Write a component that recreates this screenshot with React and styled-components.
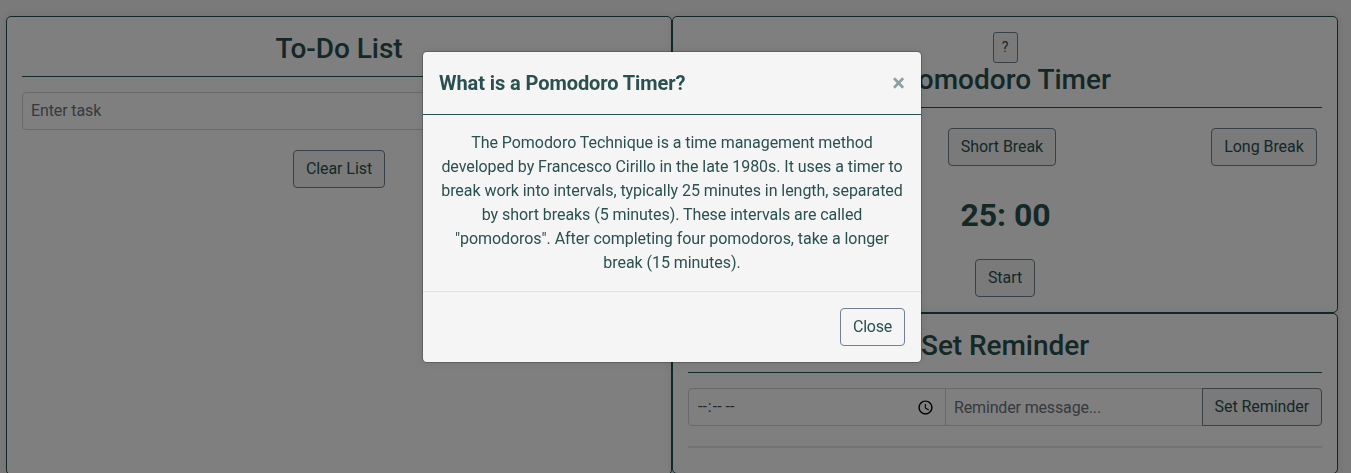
import React from "react";
import styled, { createGlobalStyle, css } from "styled-components";

const Global = createGlobalStyle`
  *, *::before, *::after { box-sizing: border-box; }
  html, body { height: 100%; overflow: hidden; }
  body {
    margin: 0;
    background: #f5f5f5;
    color: #2a5050;
    font: 400 16px/1.5 Roboto, sans-serif;
    letter-spacing: -0.055px;
    text-align: center;
  }
`;

const Page = styled.main`
  display: grid;
  grid-template-columns: 666px 666px;
  padding: 16px 0 0 6px;
`;

const Column = styled.div`
  display: flex;
  flex-direction: column;
`;

const Panel = styled.section`
  height: ${(p) => p.$height}px;
  padding: 15px;
  border: 1px solid #245050;
  border-radius: 5px;
  background: #fff;
  box-shadow: 0 0 10px rgba(0, 0, 0, 0.1);
`;

const Heading = styled.h2`
  margin: 0 0 15px;
  padding-bottom: 10px;
  border-bottom: 1px solid #245050;
  font-size: 28px;
  font-weight: 500;
  line-height: 1.2;
`;

const TimerHeading = styled(Heading)`
  letter-spacing: 0;
  padding-left: 1px;
`;

const Button = styled.button`
  height: 38px;
  padding: 6px 12px;
  border: 1px solid #708090;
  border-radius: 4px;
  background: #f5f5f5;
  color: inherit;
  font: inherit;
  line-height: 24px;
  letter-spacing: -0.07px;
  white-space: nowrap;
  ${(p) =>
    p.$small &&
    css`
      display: block;
      width: 25px;
      height: 31px;
      margin: 0 auto;
      padding: 4px 8px;
      border-radius: 3px;
      font-size: 14px;
      line-height: 21px;
    `}
  ${(p) => p.$joined && css`border-radius: 0 4px 4px 0; margin-left: -1px;`}
`;

const ModeButton = styled(Button)`
  width: ${(p) => p.$width}px;
  padding: 6px 0;
  letter-spacing: -0.06px;
`;

const CloseButton = styled(Button)`
  width: 65px;
  letter-spacing: -0.25px;
`;

const Field = styled.input`
  display: block;
  width: 100%;
  height: 38px;
  padding: 6px 8px;
  border: 1px solid #ced4da;
  border-radius: 4px;
  background: #fff;
  color: #495057;
  font: inherit;
  letter-spacing: -0.12px;
  &::placeholder { color: #6c757d; opacity: 1; }
`;

const TaskField = styled(Field)`
  margin-bottom: 20px;
`;

const TimeField = styled(Field)`
  flex: 0 0 258px;
  width: 258px;
  border-radius: 4px 0 0 4px;
  letter-spacing: 0;
`;

const MessageField = styled(Field)`
  flex: 1;
  min-width: 0;
  margin-left: -1px;
  border-radius: 0;
  letter-spacing: -0.15px;
`;

const InputGroup = styled.div`
  display: flex;
`;

const Modes = styled.div`
  display: flex;
  justify-content: space-between;
  padding: 5px 5px 0;
`;

const Clock = styled.div`
  margin: 25px 0 20px;
  padding-left: 1px;
  font-size: 32px;
  font-weight: 700;
  line-height: 48px;
  letter-spacing: -0.1px;
`;

const Divider = styled.hr`
  height: 2px;
  margin: 20px 0 0;
  border: 0;
  background: #e6e6e6;
`;

const Overlay = styled.div`
  position: fixed;
  inset: 0;
  display: flex;
  justify-content: center;
  align-items: flex-start;
  padding: 51px 7px 0 0;
  background: rgba(0, 0, 0, 0.5);
`;

const Dialog = styled.div`
  width: 500px;
  border: 1px solid rgba(0, 0, 0, 0.2);
  border-radius: 5px;
  background: #f5f5f5;
  background-clip: padding-box;
  box-shadow: 0 0 10px rgba(0, 0, 0, 0.1);
`;

const DialogHeader = styled.header`
  display: flex;
  justify-content: space-between;
  align-items: center;
  height: 63px;
  padding: 0 16px;
  border-bottom: 1px solid #245050;
`;

const DialogTitle = styled.h5`
  margin: 0;
  font-size: 20px;
  font-weight: 700;
  line-height: 30px;
  letter-spacing: -0.08px;
`;

const CloseIcon = styled.button`
  padding: 0;
  border: 0;
  background: none;
  color: inherit;
  font: 700 24px/24px Roboto, sans-serif;
  text-shadow: 0 1px 0 #fff;
  opacity: 0.5;
`;

const DialogBody = styled.p`
  margin: 0;
  padding: 16px;
`;

const DialogFooter = styled.footer`
  display: flex;
  justify-content: flex-end;
  padding: 16px;
  border-top: 1px solid #dee2e6;
`;

export default function App() {
  return (
    <>
      <Global />
      <Page>
        <Panel $height={458.5}>
          <Heading>To-Do List</Heading>
          <TaskField placeholder="Enter task" />
          <Button>Clear List</Button>
        </Panel>
        <Column>
          <Panel $height={296.6}>
            <Button $small>?</Button>
            <TimerHeading>Pomodoro Timer</TimerHeading>
            <Modes>
              <ModeButton $width={100}>Pomodoro</ModeButton>
              <ModeButton $width={108}>Short Break</ModeButton>
              <ModeButton $width={106}>Long Break</ModeButton>
            </Modes>
            <Clock>25: 00</Clock>
            <Button>Start</Button>
          </Panel>
          <Panel $height={161.9}>
            <Heading>Set Reminder</Heading>
            <InputGroup>
              <TimeField type="time" />
              <MessageField placeholder="Reminder message..." />
              <Button $joined>Set Reminder</Button>
            </InputGroup>
            <Divider />
          </Panel>
        </Column>
      </Page>
      <Overlay>
        <Dialog role="dialog">
          <DialogHeader>
            <DialogTitle>What is a Pomodoro Timer?</DialogTitle>
            <CloseIcon aria-label="Close">×</CloseIcon>
          </DialogHeader>
          <DialogBody>
            The Pomodoro Technique is a time management method developed by
            Francesco Cirillo in the late 1980s. It uses a timer to break work
            into intervals, typically 25 minutes in length, separated by short
            breaks (5 minutes). These intervals are called "pomodoros". After
            completing four pomodoros, take a longer break (15 minutes).
          </DialogBody>
          <DialogFooter>
            <CloseButton>Close</CloseButton>
          </DialogFooter>
        </Dialog>
      </Overlay>
    </>
  );
}
